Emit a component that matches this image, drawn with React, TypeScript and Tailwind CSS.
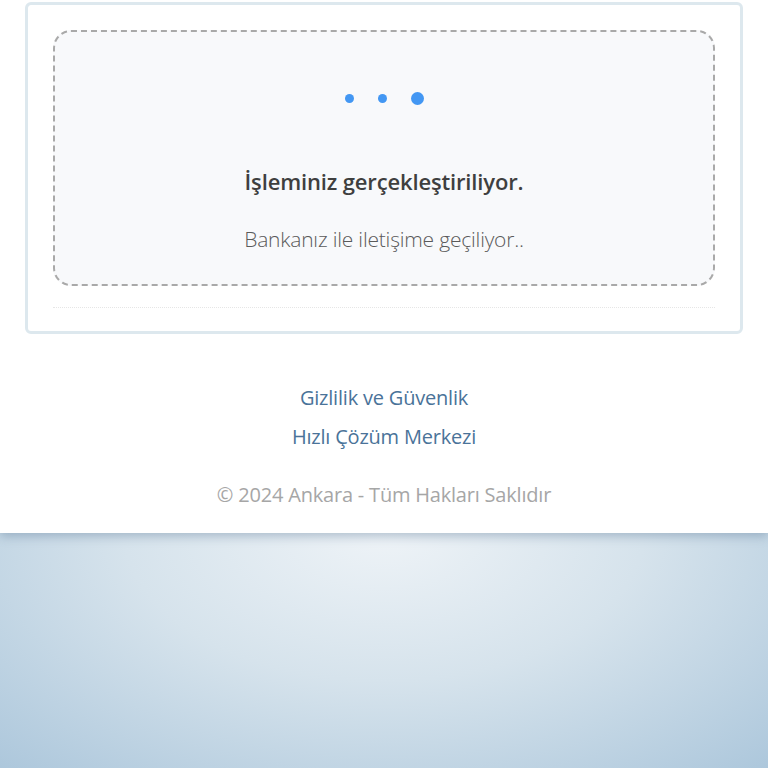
export default function App() {
  return (
    <div className="min-h-[768px] flex flex-col font-['Open_Sans',sans-serif]">
      <div className="bg-white h-[533px] shadow-[0_3px_10px_rgba(80,110,140,0.4)] relative z-10">
        <div className="mx-[25px] mt-[2px] h-[332px] border-[3px] border-[#dde8ee] rounded-md px-[25px] pt-[25px] flex flex-col">
          <div className="h-[256px] rounded-[18px] border-2 border-dashed border-[#a9a9a9] bg-[#f8f9fb] flex flex-col items-center">
            <div className="flex items-center gap-[24px] mt-[59px] h-[14px]">
              <span className="w-[9px] h-[9px] rounded-full bg-[#4397f3]" />
              <span className="w-[9px] h-[9px] rounded-full bg-[#4397f3]" />
              <span className="w-[13px] h-[13px] rounded-full bg-[#4397f3]" />
            </div>
            <p className="mt-[62px] text-[22px] font-semibold text-[#3f3f3f] leading-[28px] tracking-[-0.15px]">
              İşleminiz gerçekleştiriliyor.
            </p>
            <p className="mt-[30px] text-[21px] font-light text-[#5a5a5a] leading-[28px] tracking-[-0.2px]">
              Bankanız ile iletişime geçiliyor..
            </p>
          </div>
          <div className="mt-[21px] border-t border-dotted border-[#e6e6e6]" />
        </div>
        <div className="flex flex-col items-center mt-[50px]">
          <a className="text-[20px] text-[#4a7399] leading-[28px] tracking-[-0.2px]">Gizlilik ve Güvenlik</a>
          <a className="mt-[11px] text-[20px] text-[#4a7399] leading-[28px] tracking-[-0.2px]">Hızlı Çözüm Merkezi</a>
          <p className="mt-[30px] text-[20px] text-[#a6a6a6] leading-[28px] tracking-[-0.2px]">© 2024 Ankara - Tüm Hakları Saklıdır</p>
        </div>
      </div>
      <div className="flex-1 bg-[radial-gradient(ellipse_75%_140%_at_50%_0%,#eef3f7_0%,#d6e3ec_45%,#abc6db_100%)]" />
    </div>
  );
}
